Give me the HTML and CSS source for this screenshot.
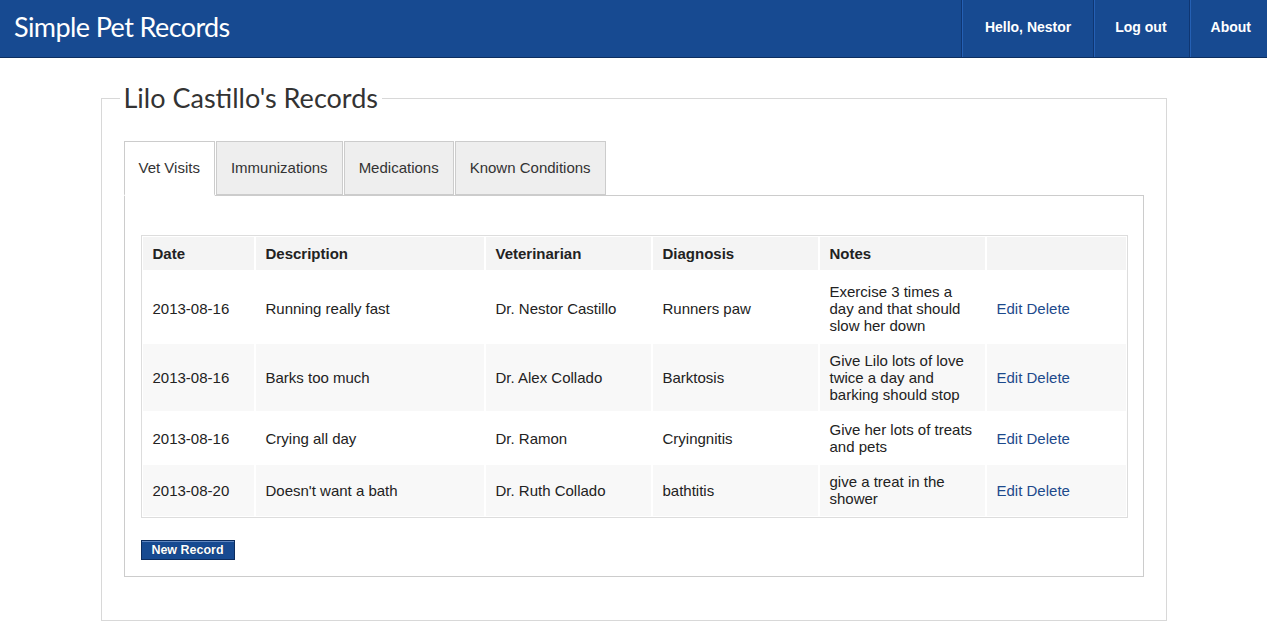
FILE: index.html
```html
<!DOCTYPE html>
<html>
<head>
<meta charset="utf-8">
<title>Simple Pet Records</title>
<link rel="stylesheet" href="styles.css">
</head>
<body>
<header class="topbar">
  <div class="brand">Simple Pet Records</div>
  <nav class="nav">
    <a class="nav-item" href="#">Hello, Nestor</a>
    <a class="nav-item" href="#">Log out</a>
    <a class="nav-item" href="#">About</a>
  </nav>
</header>
<main class="page">
  <fieldset class="records">
    <legend class="records-title">Lilo Castillo's Records</legend>
    <ul class="tabs">
      <li class="tab active">Vet Visits</li>
      <li class="tab">Immunizations</li>
      <li class="tab">Medications</li>
      <li class="tab">Known Conditions</li>
    </ul>
    <div class="panel">
      <table class="grid">
        <colgroup>
          <col class="c-date"><col class="c-desc"><col class="c-vet"><col class="c-diag"><col class="c-notes"><col class="c-act">
        </colgroup>
        <thead>
          <tr><th>Date</th><th>Description</th><th>Veterinarian</th><th>Diagnosis</th><th>Notes</th><th></th></tr>
        </thead>
        <tbody>
          <tr class="r1"><td>2013-08-16</td><td>Running really fast</td><td>Dr. Nestor Castillo</td><td>Runners paw</td><td>Exercise 3 times a day and that should slow her down</td><td><a href="#">Edit</a> <a href="#">Delete</a></td></tr>
          <tr class="alt"><td>2013-08-16</td><td>Barks too much</td><td>Dr. Alex Collado</td><td>Barktosis</td><td>Give Lilo lots of love twice a day and barking should stop</td><td><a href="#">Edit</a> <a href="#">Delete</a></td></tr>
          <tr><td>2013-08-16</td><td>Crying all day</td><td>Dr. Ramon</td><td>Cryingnitis</td><td>Give her lots of treats and pets</td><td><a href="#">Edit</a> <a href="#">Delete</a></td></tr>
          <tr class="alt"><td>2013-08-20</td><td>Doesn't want a bath</td><td>Dr. Ruth Collado</td><td>bathtitis</td><td>give a treat in the shower</td><td><a href="#">Edit</a> <a href="#">Delete</a></td></tr>
        </tbody>
      </table>
      <button class="btn">New Record</button>
    </div>
  </fieldset>
</main>
</body>
</html>
```
FILE: styles.css
```css
html, body {
  margin: 0;
  padding: 0;
  background: #fff;
}
body {
  font-family: "Liberation Sans", Arial, sans-serif;
  font-size: 15px;
  color: #222;
}
.topbar {
  height: 57px;
  background: #174a91;
  border-bottom: 1px solid #0d2f60;
  display: flex;
  align-items: stretch;
  justify-content: space-between;
}
.brand {
  font-family: Lato, "Open Sans", sans-serif;
  font-size: 27px;
  color: #fff;
  padding-left: 14px;
  line-height: 53px;
  letter-spacing: -0.6px;
}
.nav {
  display: flex;
  align-items: stretch;
}
.nav-item {
  display: flex;
  align-items: center;
  padding: 0 22px 3px 21px;
  color: #fff;
  font-weight: bold;
  font-size: 14px;
  text-decoration: none;
  border-left: 1px solid #0f3672;
  box-shadow: inset 1px 0 0 #2560b4;
}
.nav-item:first-child {
  padding: 0 22px 3px 23px;
}
.nav-item:last-child {
  padding: 0 16px 3px 21px;
}
.page {
  width: 1066px;
  margin: 0 auto;
  padding-top: 22px;
}
.records {
  margin: 0;
  border: 1px solid #d8d8d8;
  padding: 25px 22px 43px 22px;
  min-width: 0;
}
.records-title {
  font-family: Lato, "Open Sans", sans-serif;
  font-size: 27px;
  color: #333;
  padding: 0 4px;
  margin-left: -4px;
  line-height: 36px;
}
.tabs {
  list-style: none;
  margin: 0;
  padding: 0;
  display: flex;
  position: relative;
  z-index: 1;
  margin-bottom: -1px;
}
.tab {
  background: #eee;
  border: 1px solid #ccc;
  border-bottom: 2px solid #ccc;
  height: 52px;
  line-height: 52px;
  padding: 0 14px;
  margin-right: 1px;
  color: #333;
  font-size: 15px;
}
.tab.active {
  background: #fff;
  border-bottom: 2px solid #fff;
}
.panel {
  border: 1px solid #ccc;
  padding: 39px 16px 16px 16px;
}
.grid {
  width: 987px;
  table-layout: fixed;
  border-collapse: separate;
  border-spacing: 0;
  border: 1px solid #ddd;
}
.c-date { width: 113px; }
.c-desc { width: 230px; }
.c-vet { width: 167px; }
.c-diag { width: 167px; }
.c-notes { width: 167px; }
.c-act { width: 141px; }
.grid th, .grid td {
  border: 1px solid #fff;
  padding: 8px 9px 8px 10px;
  line-height: 17px;
  text-align: left;
  vertical-align: middle;
  font-size: 15px;
}
.grid th {
  background: #f4f4f4;
  color: #222;
  font-weight: bold;
}
.grid tr.r1 td {
  padding-top: 11px;
  padding-bottom: 8px;
}
.grid tr:last-child td {
  padding-bottom: 9px;
}
.grid td { background: #fff; }
.grid tr.alt td { background: #f8f8f8; }
.grid a {
  color: #1d4a8c;
  text-decoration: none;
}
.btn {
  display: block;
  margin-top: 22px;
  width: 94px;
  height: 20px;
  padding: 0;
  background: #174a91;
  border: 1px solid #0c2c5e;
  box-shadow: inset 0 1px 0 #5f86c0;
  color: #fff;
  font-family: "Liberation Sans", Arial, sans-serif;
  font-weight: bold;
  font-size: 12.5px;
  line-height: 18px;
  text-shadow: 0 0 1px #0b2a55;
}
```
